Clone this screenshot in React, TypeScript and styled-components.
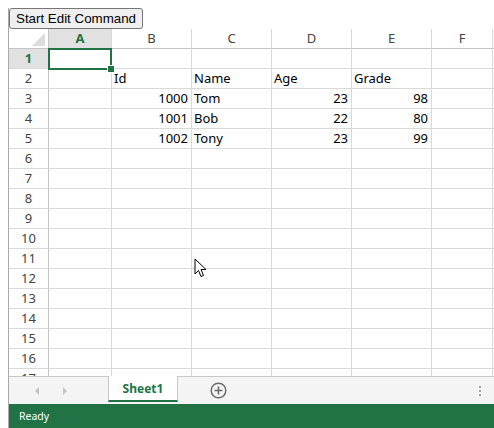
import React from "react";
import styled, { createGlobalStyle } from "styled-components";

const GlobalStyle = createGlobalStyle`
  html, body { margin: 0; padding: 0; overflow: hidden; background: #fff; }
  body { margin: 8px 0 0 8px; font-family: "Noto Sans", sans-serif; }
`;

const Wrapper = styled.div`
  border-left: 1px solid #a9a9a9;
  height: 420px;
  display: flex;
  flex-direction: column;
  overflow: hidden;
`;

const CommandButton = styled.button`
  align-self: flex-start;
  height: 21px;
  margin: 0;
  padding: 0 6px;
  font-family: "Liberation Sans", Arial, sans-serif;
  font-size: 13.33px;
  color: #000;
  background: #efefef;
  border: 1px solid #767676;
  border-radius: 3px;
`;

const Sheet = styled.div`
  flex: 1;
  display: flex;
  flex-direction: column;
  min-height: 0;
`;

const GridViewport = styled.div`
  position: relative;
  height: 347px;
  overflow: hidden;
`;

const Grid = styled.div<{ $template: string }>`
  display: grid;
  grid-template-columns: ${(p) => p.$template};
  grid-auto-rows: 20px;
  width: max-content;
`;

const Cell = styled.div<{ $align?: "left" | "right" }>`
  box-sizing: border-box;
  border-right: 1px solid #d9d9d9;
  border-bottom: 1px solid #d9d9d9;
  padding: 0 3px 0 2px;
  font-size: 13px;
  line-height: 19px;
  color: #000;
  white-space: nowrap;
  overflow: hidden;
  text-align: ${(p) => p.$align ?? "left"};
`;

const HeaderCell = styled.div<{ $selected?: boolean }>`
  box-sizing: border-box;
  border-right: 1px solid #d9d9d9;
  border-bottom: 1px solid #c4c4c4;
  background: ${(p) => (p.$selected ? "#e1e1e1" : "#fff")};
  color: ${(p) => (p.$selected ? "#217346" : "#444")};
  font-weight: ${(p) => (p.$selected ? 700 : 400)};
  font-size: 13px;
  line-height: 19px;
  text-align: center;
  white-space: nowrap;
  overflow: hidden;
`;

const RowHeader = styled(HeaderCell)`
  border-bottom-color: #d9d9d9;
  border-right-color: #c4c4c4;
`;

const Corner = styled.div`
  box-sizing: border-box;
  position: relative;
  border-right: 1px solid #c4c4c4;
  border-bottom: 1px solid #c4c4c4;
  background: #fff;
  &::after {
    content: "";
    position: absolute;
    right: 3px;
    bottom: 2px;
    width: 13px;
    height: 13px;
    background: #dcdcdc;
    clip-path: polygon(100% 0, 100% 100%, 0 100%);
  }
`;

const Selection = styled.div`
  position: absolute;
  left: 39px;
  top: 19px;
  width: 64px;
  height: 22px;
  box-sizing: border-box;
  border: 2px solid #217346;
  pointer-events: none;
`;

const FillHandle = styled.div`
  position: absolute;
  right: -4px;
  bottom: -4px;
  width: 6px;
  height: 6px;
  background: #217346;
  border: 1px solid #fff;
  box-sizing: content-box;
  margin: -1px;
`;

const Cursor = styled.svg`
  position: absolute;
  left: 185px;
  top: 229px;
  pointer-events: none;
`;

const TabBar = styled.div`
  box-sizing: border-box;
  height: 28px;
  background: #f4f4f4;
  border-top: 1px solid #c8c8c8;
  display: flex;
  align-items: stretch;
`;

const NavArea = styled.div`
  width: 99px;
  display: flex;
  align-items: center;
  gap: 24px;
  padding-left: 26px;
  box-sizing: border-box;
`;

const NavArrow = styled.span<{ $dir: "left" | "right" }>`
  width: 0;
  height: 0;
  border-top: 4px solid transparent;
  border-bottom: 4px solid transparent;
  ${(p) =>
    p.$dir === "left"
      ? "border-right: 4px solid #c3c3c3;"
      : "border-left: 4px solid #c3c3c3;"}
`;

const Tab = styled.div`
  box-sizing: border-box;
  width: 70px;
  margin-top: -1px;
  height: 26px;
  background: #fff;
  border-left: 1px solid #c8c8c8;
  border-right: 1px solid #c8c8c8;
  border-bottom: 2px solid #217346;
  color: #217346;
  font-weight: 700;
  font-size: 12px;
  display: flex;
  align-items: center;
  justify-content: center;
  padding-top: 1px;
`;

const AddSheet = styled.div`
  width: 80px;
  display: flex;
  align-items: center;
  justify-content: center;
  padding-bottom: 1px;
`;

const Spacer = styled.div`
  flex: 1;
`;

const MoreDots = styled.div`
  width: 26px;
  display: flex;
  flex-direction: column;
  align-items: center;
  justify-content: center;
  gap: 2px;
  padding-right: 1px;
  span {
    width: 2px;
    height: 2px;
    background: #a6a6a6;
  }
`;

const StatusBar = styled.div`
  height: 24px;
  background: #217346;
  color: #fff;
  font-size: 10.5px;
  display: flex;
  align-items: center;
  padding-left: 10px;
`;

const columns = [
  { key: "A", w: 63 },
  { key: "B", w: 80 },
  { key: "C", w: 80 },
  { key: "D", w: 80 },
  { key: "E", w: 80 },
  { key: "F", w: 61 },
  { key: "G", w: 80 },
];

type CellVal = { v: string; a?: "left" | "right" };

const data: Record<number, Record<string, CellVal>> = {
  2: { B: { v: "Id" }, C: { v: "Name" }, D: { v: "Age" }, E: { v: "Grade" } },
  3: { B: { v: "1000", a: "right" }, C: { v: "Tom" }, D: { v: "23", a: "right" }, E: { v: "98", a: "right" } },
  4: { B: { v: "1001", a: "right" }, C: { v: "Bob" }, D: { v: "22", a: "right" }, E: { v: "80", a: "right" } },
  5: { B: { v: "1002", a: "right" }, C: { v: "Tony" }, D: { v: "23", a: "right" }, E: { v: "99", a: "right" } },
};

export default function App() {
  const template = ["40px", ...columns.map((c) => `${c.w}px`)].join(" ");
  const rows = Array.from({ length: 17 }, (_, i) => i + 1);
  return (
    <>
      <GlobalStyle />
      <Wrapper>
        <CommandButton>Start Edit Command</CommandButton>
        <Sheet>
          <GridViewport>
            <Grid $template={template}>
              <Corner />
              {columns.map((c) => (
                <HeaderCell key={c.key} $selected={c.key === "A"}>
                  {c.key}
                </HeaderCell>
              ))}
              {rows.map((r) => (
                <React.Fragment key={r}>
                  <RowHeader $selected={r === 1}>{r}</RowHeader>
                  {columns.map((c) => {
                    const cell = data[r]?.[c.key];
                    return (
                      <Cell key={c.key} $align={cell?.a}>
                        {cell?.v ?? ""}
                      </Cell>
                    );
                  })}
                </React.Fragment>
              ))}
            </Grid>
            <Selection>
              <FillHandle />
            </Selection>
            <Cursor width="13" height="20" viewBox="0 0 13 20">
              <path
                d="M1 1 L1 16 L4.5 12.5 L7 18.5 L9.5 17.5 L7 11.5 L12 11.5 Z"
                fill="#fff"
                stroke="#000"
                strokeWidth="1"
                strokeLinejoin="miter"
              />
            </Cursor>
          </GridViewport>
          <TabBar>
            <NavArea>
              <NavArrow $dir="left" />
              <NavArrow $dir="right" />
            </NavArea>
            <Tab>Sheet1</Tab>
            <AddSheet>
              <svg width="17" height="17" viewBox="0 0 17 17">
                <circle cx="8.5" cy="8.5" r="7.3" fill="none" stroke="#6b6b6b" strokeWidth="1.5" />
                <path d="M8.5 4.5 V12.5 M4.5 8.5 H12.5" stroke="#6b6b6b" strokeWidth="1.6" />
              </svg>
            </AddSheet>
            <Spacer />
            <MoreDots>
              <span />
              <span />
              <span />
            </MoreDots>
          </TabBar>
          <StatusBar>Ready</StatusBar>
        </Sheet>
      </Wrapper>
    </>
  );
}
